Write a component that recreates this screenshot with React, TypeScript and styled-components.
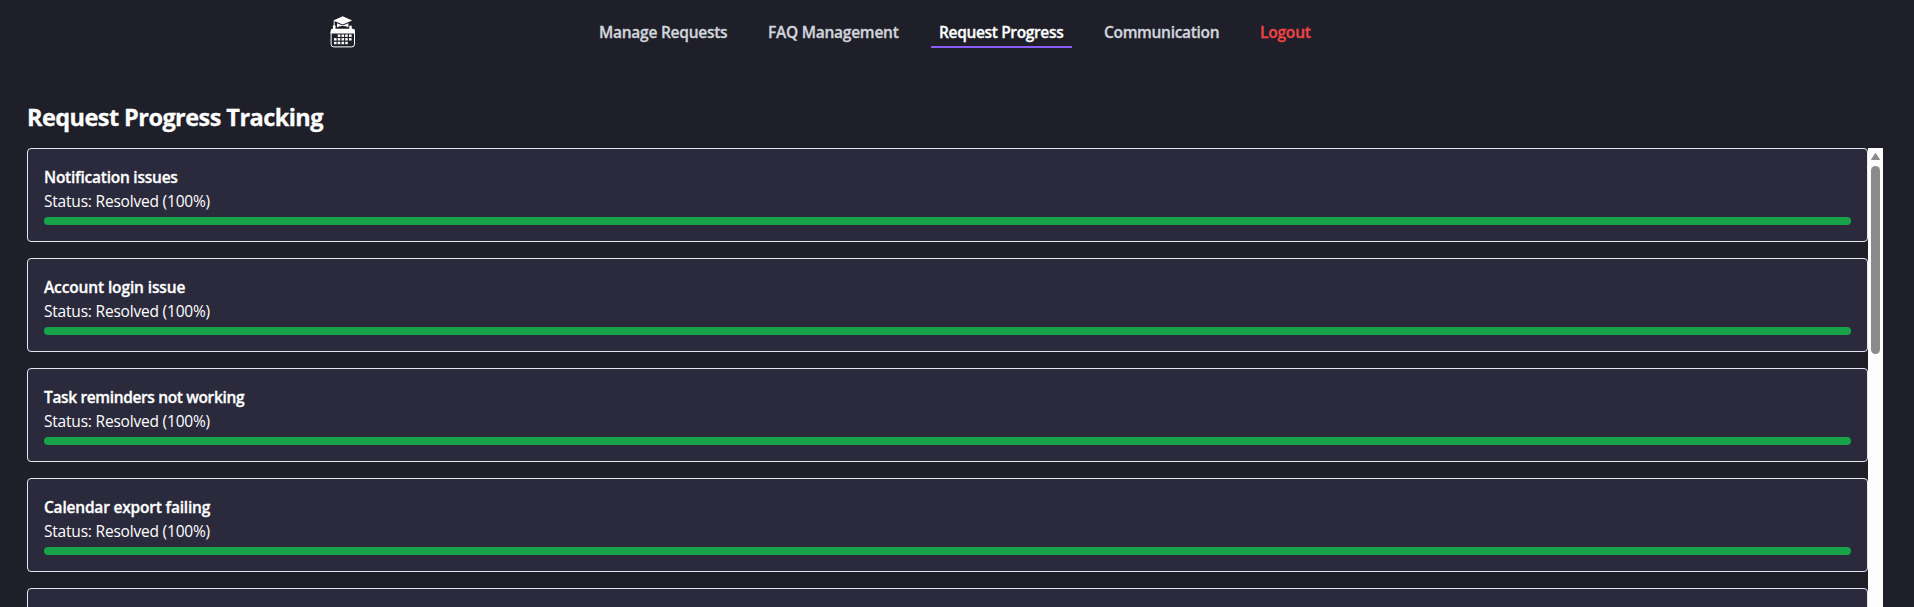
import React from 'react';
import styled, { createGlobalStyle } from 'styled-components';

const GlobalStyle = createGlobalStyle`
  * { box-sizing: border-box; }
  body {
    margin: 0;
    background: #1f1f2a;
    color: #fff;
    font-family: 'Segoe UI', 'Open Sans', 'Noto Sans', sans-serif;
    font-size: 15.5px;
    line-height: 24px;
    overflow: hidden;
  }
`;

const Page = styled.div`
  display: flex;
  flex-direction: column;
  height: 100vh;
  overflow: hidden;
`;

const Header = styled.header`
  display: flex;
  flex: none;
  align-items: flex-start;
  height: 69px;
  padding: 16px 0 0 329px;
  background: #1f1f2a;
  border-bottom: 1px solid #1d1d27;
`;

const Logo = styled.svg`
  display: block;
  flex: none;
  width: 28px;
  height: 34px;
`;

const Nav = styled.nav`
  display: flex;
  gap: 24px;
  margin-left: 234px;
`;

const NavLink = styled.a<{ $width: number; $spacing: number; $active?: boolean; $danger?: boolean }>`
  width: ${(p) => p.$width}px;
  height: 32px;
  padding: 4px 8px 0;
  border-bottom: 2px solid ${(p) => (p.$active ? '#8b5cf6' : 'transparent')};
  color: ${(p) => (p.$danger ? '#ef4444' : p.$active ? '#fff' : '#d1d5db')};
  font-weight: 600;
  line-height: 25px;
  letter-spacing: ${(p) => p.$spacing}px;
  white-space: nowrap;
  -webkit-text-stroke: 0.3px currentColor;
`;

const Main = styled.main`
  display: flex;
  flex: 1;
  flex-direction: column;
  min-height: 0;
  padding: 32px 31px 0 27px;
`;

const Title = styled.h1`
  flex: none;
  height: 47px;
  margin: 0;
  font-size: 23.5px;
  font-weight: 700;
  line-height: 33px;
  letter-spacing: -0.56px;
  -webkit-text-stroke: 0.3px currentColor;
`;

const Scroller = styled.section`
  display: flex;
  flex: 1;
  min-height: 0;
`;

const List = styled.div`
  display: flex;
  flex: 1;
  flex-direction: column;
  gap: 16px;
  overflow: hidden;
`;

const Card = styled.article`
  flex: none;
  height: 94px;
  padding: 16px;
  background: #2b2a3c;
  border: 1px solid #e5e7eb;
  border-radius: 4px;
`;

const Subject = styled.h2<{ $spacing: number }>`
  margin: 0;
  font-size: 15.5px;
  font-weight: 600;
  line-height: 24px;
  letter-spacing: ${(p) => p.$spacing}px;
  -webkit-text-stroke: 0.3px currentColor;
`;

const Status = styled.p`
  margin: 0 0 4px;
  letter-spacing: -0.2px;
`;

const Bar = styled.div`
  height: 8px;
  background: #16a34a;
  border-radius: 4px;
`;

const Track = styled.div`
  display: flex;
  flex: none;
  flex-direction: column;
  align-items: center;
  width: 15px;
  padding-top: 5px;
  background: #fcfcfc;
`;

const Arrow = styled.svg`
  display: block;
  width: 9px;
  height: 7px;
`;

const Thumb = styled.div`
  width: 9px;
  height: 188px;
  margin-top: 6px;
  background: #8b8b8b;
  border-radius: 5px;
`;

const links = [
  { label: 'Manage Requests', width: 145, spacing: -0.25 },
  { label: 'FAQ Management', width: 147, spacing: -0.25 },
  { label: 'Request Progress', width: 141, spacing: -0.35, active: true },
  { label: 'Communication', width: 132, spacing: -0.32 },
  { label: 'Logout', width: 68, spacing: -0.2, danger: true },
];

const requests = [
  { subject: 'Notification issues', spacing: -0.24 },
  { subject: 'Account login issue', spacing: -0.13 },
  { subject: 'Task reminders not working', spacing: -0.36 },
  { subject: 'Calendar export failing', spacing: -0.2 },
  { subject: '', spacing: 0 },
];

const dots = [
  [10, 19.7], [13.8, 19.7], [17.5, 19.7], [21.3, 19.7],
  [6.3, 23.3], [10, 23.3], [13.8, 23.3], [17.5, 23.3], [21.3, 23.3],
  [6.3, 27], [10, 27], [13.8, 27], [17.5, 27],
];

function CalendarLogo() {
  return (
    <Logo viewBox="0 0 28 34">
      <path d="M4.3 4.6 13.7.3l9.5 4.3-9.5 4z" fill="#fff" />
      <path d="M8 7.2v4q5.7-2.6 11.4 0v-4l-5.7 2.4z" fill="#fff" />
      <path d="M5.2 5v4.5" stroke="#fff" strokeWidth=".9" />
      <rect x="3.9" y="9" width="2.6" height="5" rx="1.3" fill="#fff" />
      <rect x="20.2" y="9.4" width="2.6" height="5" rx="1.3" fill="#fff" />
      <path d="M1.6 17.6V15q0-2.2 2.2-2.2h20q2.2 0 2.2 2.2v2.6z" fill="#fff" />
      <path d="M2.1 16v12.2q0 2.7 2.7 2.7h18q2.7 0 2.7-2.7V16" fill="none" stroke="#fff" strokeWidth="1" />
      {dots.map(([x, y]) => (
        <rect key={`${x}-${y}`} x={x - 1.3} y={y - 1.2} width="2.6" height="2.4" fill="#fff" />
      ))}
    </Logo>
  );
}

export default function App() {
  return (
    <Page>
      <GlobalStyle />
      <Header>
        <CalendarLogo />
        <Nav>
          {links.map((l) => (
            <NavLink key={l.label} $width={l.width} $spacing={l.spacing} $active={l.active} $danger={l.danger}>
              {l.label}
            </NavLink>
          ))}
        </Nav>
      </Header>
      <Main>
        <Title>Request Progress Tracking</Title>
        <Scroller>
          <List>
            {requests.map((r) => (
              <Card key={r.subject}>
                {r.subject && (
                  <>
                    <Subject $spacing={r.spacing}>{r.subject}</Subject>
                    <Status>Status: Resolved (100%)</Status>
                    <Bar />
                  </>
                )}
              </Card>
            ))}
          </List>
          <Track>
            <Arrow viewBox="0 0 9 7">
              <path d="M4.5.5 8.5 6.5h-8z" fill="#8b8b8b" stroke="#8b8b8b" strokeLinejoin="round" />
            </Arrow>
            <Thumb />
          </Track>
        </Scroller>
      </Main>
    </Page>
  );
}
